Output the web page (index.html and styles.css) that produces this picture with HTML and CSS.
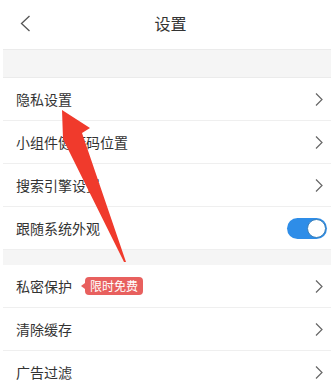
FILE: index.html
```
<!DOCTYPE html>
<html lang="zh">
<head>
<meta charset="utf-8">
<link rel="stylesheet" href="styles.css">
</head>
<body>
<div class="page">
  <header class="header">
    <svg class="back" width="12" height="18" viewBox="0 0 12 18"><polyline points="9.5,1 1.5,8.5 9.5,16" fill="none" stroke="#555" stroke-width="1.3"/></svg>
    <div class="title">设置</div>
  </header>
  <div class="list">
    <div class="band band-top"></div>
    <div class="row"><span class="label">隐私设置</span><svg class="chev" width="8" height="13" viewBox="0 0 8 13"><polyline points="1,0.5 7,6.5 1,12.5" fill="none" stroke="#666" stroke-width="1.2"/></svg></div>
    <div class="row"><span class="label">小组件健康码位置</span><svg class="chev" width="8" height="13" viewBox="0 0 8 13"><polyline points="1,0.5 7,6.5 1,12.5" fill="none" stroke="#666" stroke-width="1.2"/></svg></div>
    <div class="row"><span class="label">搜索引擎设置</span><svg class="chev" width="8" height="13" viewBox="0 0 8 13"><polyline points="1,0.5 7,6.5 1,12.5" fill="none" stroke="#666" stroke-width="1.2"/></svg></div>
    <div class="row"><span class="label">跟随系统外观</span><div class="toggle"><div class="knob"></div></div></div>
    <div class="band band-mid"></div>
    <div class="row"><span class="label">私密保护</span><span class="badge">限时免费</span><svg class="chev" width="8" height="13" viewBox="0 0 8 13"><polyline points="1,0.5 7,6.5 1,12.5" fill="none" stroke="#666" stroke-width="1.2"/></svg></div>
    <div class="row"><span class="label">清除缓存</span><svg class="chev" width="8" height="13" viewBox="0 0 8 13"><polyline points="1,0.5 7,6.5 1,12.5" fill="none" stroke="#666" stroke-width="1.2"/></svg></div>
    <div class="row"><span class="label">广告过滤</span><svg class="chev" width="8" height="13" viewBox="0 0 8 13"><polyline points="1,0.5 7,6.5 1,12.5" fill="none" stroke="#666" stroke-width="1.2"/></svg></div>
  </div>
  <svg class="arrow" width="331" height="384" viewBox="0 0 331 384">
    <polygon points="62,110 90,128 82,133 126,262 124,262 63,139" fill="#f03a2c"/>
  </svg>
</div>
</body>
</html>
```
FILE: styles.css
```
html, body {
  margin: 0;
  padding: 0;
  background: #fff;
}
.page {
  position: relative;
  width: 331px;
  height: 384px;
  overflow: hidden;
  font-family: "Noto Sans CJK SC", "Noto Sans", sans-serif;
  color: #333;
}
.header {
  height: 49px;
  display: flex;
  align-items: center;
  justify-content: center;
  position: relative;
}
.back {
  position: absolute;
  left: 20px;
  top: 15px;
}
.title {
  font-size: 16px;
  color: #333;
  margin-left: 10px;
  margin-top: -3px;
}
.list {
  margin-left: 3px;
}
.band {
  background: #f5f5f5;
}
.band-top {
  height: 27px;
  border-top: 1px solid #ebebeb;
  border-bottom: 1px solid #ebebeb;
}
.band-mid {
  height: 15px;
}
.row {
  height: 42px;
  display: flex;
  align-items: center;
  padding-left: 13px;
  padding-right: 8px;
  border-bottom: 1px solid #efefef;
  font-size: 14px;
  color: #333;
}
.label {
  line-height: 20px;
}
.chev {
  margin-left: auto;
}
.toggle {
  margin-left: auto;
  margin-right: -4px;
  width: 40px;
  height: 21px;
  border-radius: 11px;
  background: #2e8de8;
  display: flex;
  align-items: center;
  justify-content: flex-end;
  padding-right: 1px;
  box-sizing: border-box;
}
.knob {
  width: 19px;
  height: 19px;
  border-radius: 50%;
  background: #fff;
  box-sizing: border-box;
  border: 1px solid #3a7fb8;
}
.badge {
  position: relative;
  margin-left: 13px;
  background: #e8605e;
  color: #fff;
  font-size: 12px;
  line-height: 18px;
  height: 18px;
  padding: 0 5px;
  border-radius: 4px;
}
.badge::before {
  content: "";
  position: absolute;
  left: -4px;
  top: 6px;
  border-top: 3px solid transparent;
  border-bottom: 3px solid transparent;
  border-right: 4px solid #e8605e;
}
.arrow {
  position: absolute;
  left: 0;
  top: 0;
  pointer-events: none;
}
```
